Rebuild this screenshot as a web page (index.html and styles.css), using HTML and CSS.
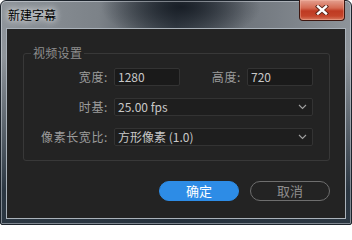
FILE: index.html
```html
<!DOCTYPE html>
<html lang="zh-CN">
<head>
<meta charset="utf-8">
<title>新建字幕</title>
<link rel="stylesheet" href="styles.css">
</head>
<body>
<div class="window">
  <div class="titlebar">
    <span class="title">新建字幕</span>
    <button class="close" aria-label="关闭">
      <svg width="14" height="10" viewBox="0 0 14 10">
        <path d="M3 1.5 L11 8.5 M11 1.5 L3 8.5" stroke="#5a2418" stroke-width="4.2" stroke-linecap="square" fill="none"/>
        <path d="M3 1.5 L11 8.5 M11 1.5 L3 8.5" stroke="#ffffff" stroke-width="2.4" stroke-linecap="square" fill="none"/>
      </svg>
    </button>
  </div>
  <div class="client">
    <fieldset class="group">
      <legend class="legend">视频设置</legend>
      <div class="grid">
        <label class="label">宽度:</label>
        <div class="input">1280</div>
        <label class="label">高度:</label>
        <div class="input">720</div>

        <label class="label">时基:</label>
        <div class="select span3"><span>25.00 fps</span><svg class="chev" width="9" height="6" viewBox="0 0 9 6"><path d="M1 1 L4.5 4.5 L8 1" stroke="#a0a0a0" stroke-width="1.1" fill="none"/></svg></div>

        <label class="label">像素长宽比:</label>
        <div class="select span3"><span>方形像素 (1.0)</span><svg class="chev" width="9" height="6" viewBox="0 0 9 6"><path d="M1 1 L4.5 4.5 L8 1" stroke="#a0a0a0" stroke-width="1.1" fill="none"/></svg></div>
      </div>
    </fieldset>
    <div class="actions">
      <button class="btn primary">确定</button>
      <button class="btn secondary">取消</button>
    </div>
  </div>
</div>
</body>
</html>
```
FILE: styles.css
```css
* { box-sizing: border-box; }
html, body { margin: 0; padding: 0; }
body {
  width: 352px;
  height: 225px;
  background: #ffffff;
  font-family: "Noto Sans CJK SC", "Noto Sans", sans-serif;
  overflow: hidden;
}
.window {
  width: 352px;
  height: 225px;
  border: 1px solid #1c232b;
  border-radius: 6px 6px 2px 2px;
  box-shadow: inset 0 0 0 1px rgba(230, 236, 242, 0.45);
  background:
    radial-gradient(ellipse 80px 34px at 180px 6px, rgba(22, 28, 36, 0.95), rgba(22, 28, 36, 0) 100%),
    linear-gradient(to bottom, rgba(30, 40, 50, 0) 0%, rgba(30, 40, 50, 0) 25%, rgba(32, 44, 56, 0.9) 85%),
    linear-gradient(to right, #8f959b 0%, #7c8288 28%, #3e464f 50%, #70767d 70%, #8e949a 100%);
  display: flex;
  flex-direction: column;
}
.titlebar {
  height: 27px;
  display: flex;
  justify-content: space-between;
  align-items: flex-start;
}
.title {
  margin: 7px 0 0 7px;
  font-size: 12px;
  line-height: 14px;
  color: #000000;
  text-shadow: 0 0 6px rgba(255, 255, 255, 0.9), 0 0 10px rgba(255, 255, 255, 0.6);
}
.close {
  margin: -1px 6px 0 0;
  width: 46px;
  height: 21px;
  padding: 0;
  border: 1px solid #3e1710;
  border-top: none;
  border-radius: 0 0 4px 4px;
  background: linear-gradient(to bottom, #e4a090 0%, #d46a52 40%, #bf3a22 55%, #c4442a 80%, #d87a60 100%);
  box-shadow: inset 0 0 0 1px rgba(255, 200, 180, 0.35);
  display: flex;
  align-items: center;
  justify-content: center;
}
.close svg { display: block; }
.client {
  margin: 0 5px;
  height: 191px;
  border: 1px solid #aab2ba;
  background: #232323;
  padding: 17px 15px 0 16px;
}
.group {
  margin: 0;
  padding: 8px 15px 14px 0;
  border: 1px solid #383838;
  border-radius: 3px;
  min-width: 0;
}
.legend {
  margin-left: 7px;
  padding: 0 2px;
  font-size: 12px;
  line-height: 14px;
  color: #8e8e8e;
  letter-spacing: 0.3px;
}
.grid {
  display: grid;
  grid-template-columns: 86px 66px 59px 66px;
  column-gap: 4px;
  row-gap: 12px;
  grid-auto-rows: 18px;
}
.label {
  font-size: 12px;
  line-height: 18px;
  color: #9c9c9c;
  text-align: right;
  white-space: nowrap;
  letter-spacing: 0.6px;
  padding-right: 2px;
}
.input, .select {
  border: 1px solid #333333;
  border-radius: 2px;
  background: #1a1a1a;
  color: #c8c8c8;
  font-size: 12px;
  line-height: 16px;
  padding: 0 3px;
  white-space: nowrap;
}
.select {
  background: #1e1e1e;
  display: flex;
  align-items: center;
  justify-content: space-between;
  padding-right: 5px;
}
.span3 { grid-column: 2 / 5; }
.chev { display: block; }
.actions {
  display: flex;
  justify-content: flex-end;
  gap: 11px;
  margin-top: 20px;
}
.btn {
  width: 80px;
  height: 20px;
  border-radius: 10px;
  font-family: "Noto Sans CJK SC", "Noto Sans", sans-serif;
  font-size: 13px;
  line-height: 18px;
  padding: 0;
}
.primary {
  background: #2d8ce6;
  border: 1px solid #2d8ce6;
  color: #ffffff;
}
.secondary {
  background: transparent;
  border: 1px solid #6e6e6e;
  color: #8e8e8e;
}
```
